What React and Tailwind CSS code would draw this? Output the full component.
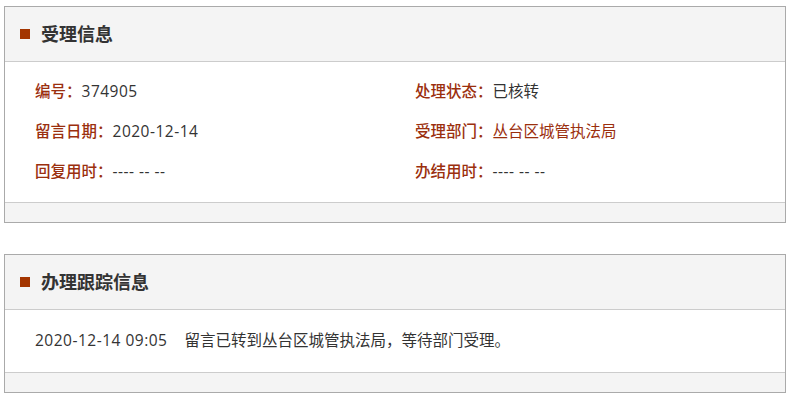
const FONT = { fontFamily: '"Open Sans", "Noto Sans CJK SC", sans-serif' };

function Panel({ title, children }) {
  return (
    <div className="ml-[4px] w-[782px] border border-[#aaaaaa] bg-white">
      <div className="flex h-[55px] items-center border-b border-[#cccccc] bg-[#f4f4f4] pl-[15px]">
        <span className="mr-[11px] h-[10px] w-[10px] bg-[#a33500]" />
        <span className="text-[18px] font-bold text-[#333333]">{title}</span>
      </div>
      {children}
      <div className="h-[20px] border-t border-[#cccccc] bg-[#f4f4f4]" />
    </div>
  );
}

function Field({ label, value, red, latin }) {
  return (
    <div className="flex h-[40px] items-center">
      <span className="font-medium text-[#9b2f0e]">{label}：</span>
      <span
        className={[
          red ? 'text-[#9b2f0e]' : 'text-[#333333]',
          latin ? 'tracking-[0.5px]' : '',
        ].join(' ')}
      >
        {value}
      </span>
    </div>
  );
}

export default function App() {
  return (
    <div className="min-h-[403px] bg-white pt-[6px] text-[15.5px]" style={FONT}>
      <Panel title="受理信息">
        <div className="grid grid-cols-[380px_1fr] py-[10px] pl-[30px]">
          <Field label="编号" value="374905" latin />
          <Field label="处理状态" value="已核转" />
          <Field label="留言日期" value="2020-12-14" latin />
          <Field label="受理部门" value="丛台区城管执法局" red />
          <Field label="回复用时" value="---- -- --" latin />
          <Field label="办结用时" value="---- -- --" latin />
        </div>
      </Panel>
      <div className="h-[31px]" />
      <Panel title="办理跟踪信息">
        <div className="flex h-[62px] items-center pl-[30px] text-[#333333]">
          <span className="tracking-[0.5px]">2020-12-14 09:05</span>
          <span className="ml-[17px]">留言已转到丛台区城管执法局，等待部门受理。</span>
        </div>
      </Panel>
    </div>
  );
}
